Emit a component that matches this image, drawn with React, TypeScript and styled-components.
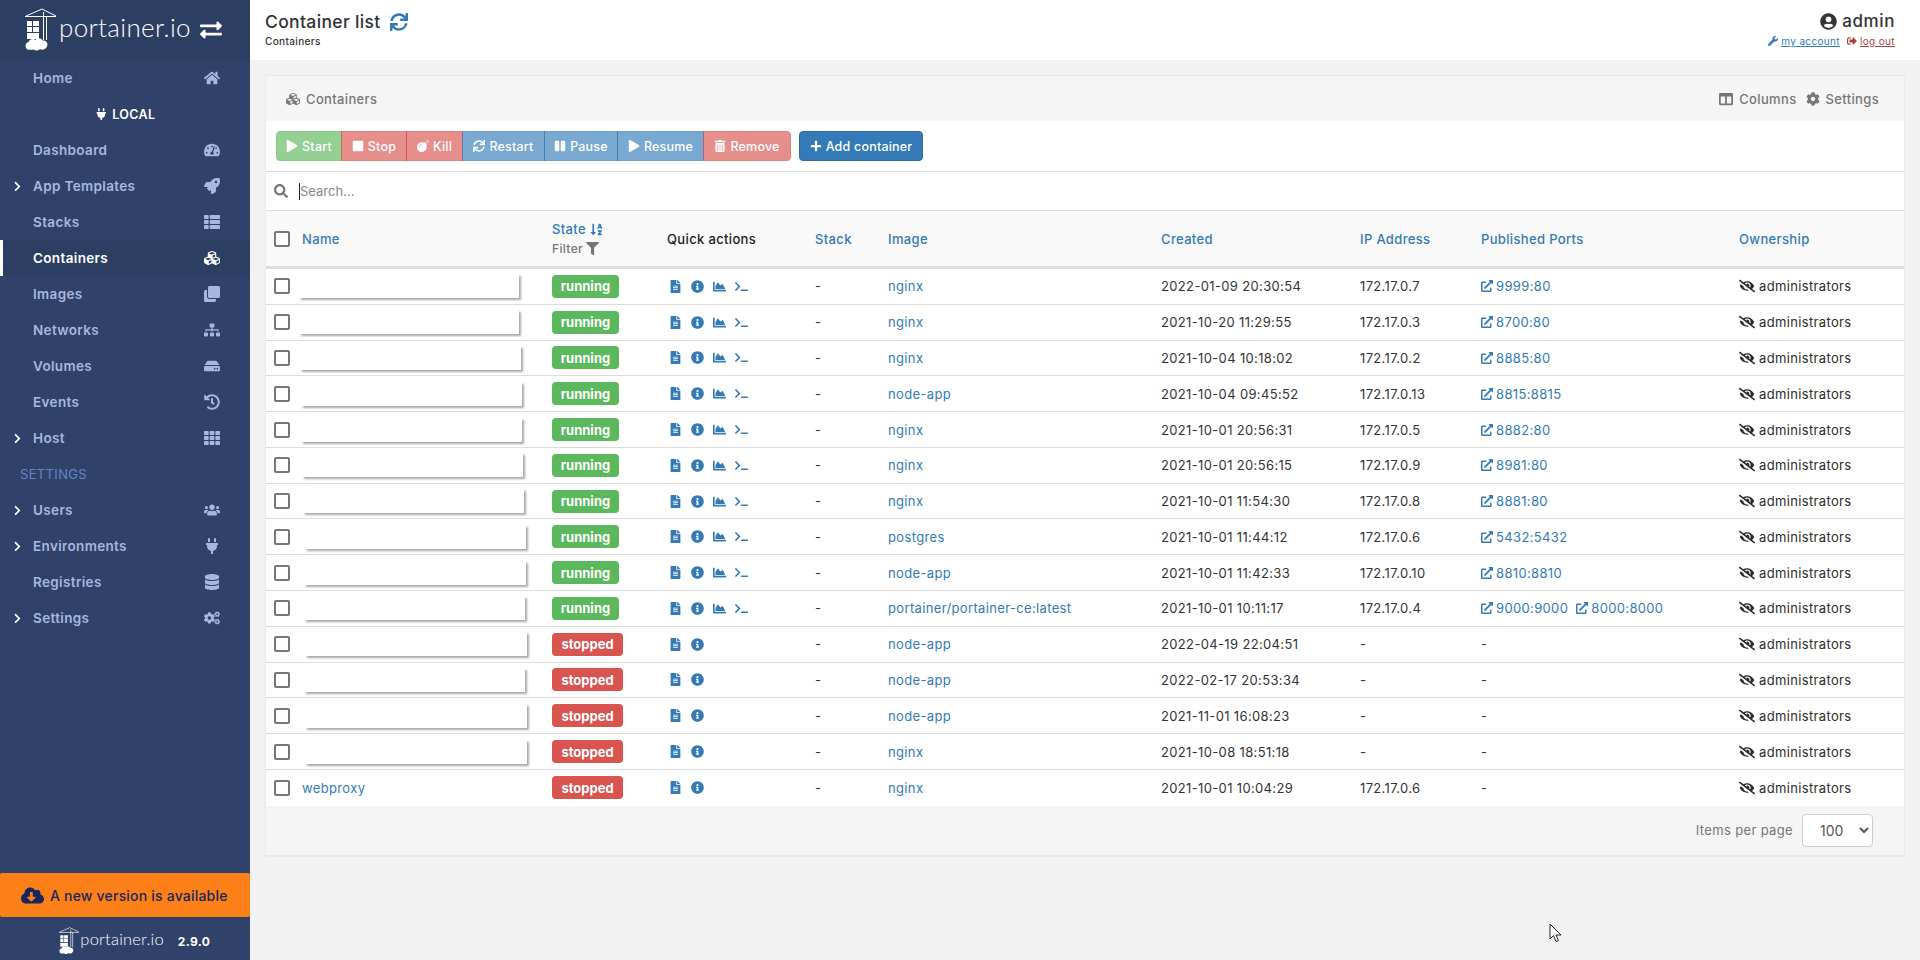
import React from 'react';
import styled, { createGlobalStyle } from 'styled-components';
import {
  FaBomb, FaChartArea, FaChevronRight, FaClone, FaCloudDownloadAlt, FaCog, FaCogs, FaColumns, FaCubes, FaDatabase,
  FaExchangeAlt, FaExternalLinkAlt, FaEyeSlash, FaFileAlt, FaFilter, FaHdd, FaHistory, FaHome, FaInfoCircle, FaPause,
  FaPlay, FaPlug, FaPlus, FaRocket, FaSearch, FaSignOutAlt, FaSitemap, FaSortAlphaDown, FaStop, FaSync, FaTachometerAlt,
  FaTerminal, FaTh, FaThList, FaTrashAlt, FaUserCircle, FaUsers, FaWrench,
} from 'react-icons/fa';

const GlobalStyle = createGlobalStyle`
  html, body { margin: 0; height: 100%; }
  body {
    background: #f2f2f2;
    color: #333;
    font-family: Inter, "Open Sans", "Liberation Sans", sans-serif;
    font-size: 13px;
    letter-spacing: 0.35px;
    overflow: hidden;
  }
  * { box-sizing: border-box; }
`;

const Page = styled.div`
  display: flex;
  width: 1920px;
  height: 960px;
  position: relative;
`;

const Sidebar = styled.aside`
  width: 250px;
  flex: none;
  display: flex;
  flex-direction: column;
  background: #30426a;
`;

const Brand = styled.div`
  height: 60px;
  flex: none;
  display: flex;
  align-items: center;
  justify-content: space-between;
  padding: 0 28px 0 25px;
  background: #2d3e63;
  color: #fff;
  font-size: 22px;
`;

const LogoWrap = styled.div<{ $small?: boolean }>`
  display: flex;
  align-items: center;
  gap: ${(p) => (p.$small ? '1px' : '2px')};
  color: #fff;
  svg { flex: none; }
`;

const LogoText = styled.span<{ $small?: boolean }>`
  font-family: Lato, sans-serif;
  font-weight: 300;
  font-size: ${(p) => (p.$small ? '16.5px' : '26px')};
  letter-spacing: ${(p) => (p.$small ? '0.2px' : '0.35px')};
  line-height: 1;
  margin-top: ${(p) => (p.$small ? '-3px' : '-6px')};
`;

const Nav = styled.nav`
  display: flex;
  flex-direction: column;
`;

const MenuRow = styled.div<{ $active?: boolean }>`
  height: 36px;
  display: flex;
  align-items: center;
  padding-right: 30px;
  font-weight: 600;
  font-size: 13.5px;
  color: ${(p) => (p.$active ? '#fff' : '#a8b7de')};
  background: ${(p) => (p.$active ? '#2d3e63' : 'transparent')};
  box-shadow: ${(p) => (p.$active ? 'inset 3px 0 0 #fff' : 'none')};
`;

const Lead = styled.span`
  width: 33px;
  flex: none;
  padding-left: 12px;
  color: #fff;
  display: flex;
  font-size: 11px;
`;

const MenuLabel = styled.span`
  flex: 1;
`;

const MenuIcon = styled.span`
  display: flex;
  font-size: 16px;
`;

const EndpointRow = styled.div`
  height: 36px;
  display: flex;
  align-items: center;
  justify-content: center;
  gap: 5px;
  color: #fff;
  font-weight: 600;
  font-size: 12.5px;
`;

const SectionLabel = styled.div`
  height: 36px;
  display: flex;
  align-items: center;
  padding-left: 20px;
  color: #6382c8;
  font-size: 13px;
`;

const SideFooter = styled.div`
  margin-top: auto;
  display: flex;
  flex-direction: column;
`;

const UpdateBanner = styled.div`
  height: 44px;
  display: flex;
  align-items: center;
  gap: 6px;
  padding-left: 21px;
  background: #fd7f17;
  border-radius: 2px;
  color: #15275c;
  font-size: 14px;
  font-weight: 500;
  letter-spacing: 0.2px;
  margin-bottom: 10px;
  svg { font-size: 23px; }
`;

const VersionRow = styled.div`
  height: 33px;
  display: flex;
  align-items: center;
  gap: 14px;
  padding: 0 0 5px 59px;
  color: #fff;
`;

const Version = styled.span`
  font-size: 12px;
  font-weight: 700;
`;

const Main = styled.main`
  flex: 1;
  display: flex;
  flex-direction: column;
  min-width: 0;
`;

const TopBar = styled.header`
  height: 60px;
  flex: none;
  display: flex;
  justify-content: space-between;
  padding: 11px 25px 0 15px;
  background: #fff;
`;

const TitleBlock = styled.div`
  display: flex;
  flex-direction: column;
`;

const TitleLine = styled.div`
  display: flex;
  align-items: center;
  gap: 9px;
  font-size: 17.5px;
  font-weight: 500;
  line-height: 21px;
  color: #333;
  svg { color: #337ab7; font-size: 18px; }
`;

const Crumb = styled.div`
  font-size: 10px;
  line-height: 12px;
  margin-top: 3px;
  font-weight: 500;
`;

const UserBlock = styled.div`
  display: flex;
  flex-direction: column;
  align-items: flex-end;
`;

const UserName = styled.div`
  display: flex;
  align-items: center;
  gap: 5px;
  font-size: 17px;
  font-weight: 500;
  line-height: 21px;
  letter-spacing: 0.6px;
  svg { font-size: 17px; }
`;

const UserLinks = styled.div`
  display: flex;
  gap: 7px;
  font-size: 10px;
  line-height: 12px;
  margin-top: 3px;
`;

const UserLink = styled.a<{ $danger?: boolean }>`
  display: flex;
  align-items: center;
  gap: 3px;
  color: ${(p) => (p.$danger ? '#a94442' : '#337ab7')};
  text-decoration: underline;
  svg { font-size: 10px; }
`;

const Content = styled.div`
  padding: 15px;
`;

const Panel = styled.section`
  height: 782px;
  display: flex;
  flex-direction: column;
  background: #f5f5f5;
  border: 1px solid #e9e9e9;
  border-bottom-width: 2px;
`;

const PanelTitle = styled.div`
  height: 45px;
  flex: none;
  display: flex;
  align-items: center;
  justify-content: space-between;
  padding: 0 25px 0 20px;
  color: #767676;
  font-weight: 500;
`;

const TitleItem = styled.span`
  display: inline-flex;
  align-items: center;
  gap: 6px;
  svg { font-size: 14px; }
`;

const TitleActions = styled.div`
  display: flex;
  gap: 9px;
`;

const Toolbar = styled.div`
  height: 51px;
  flex: none;
  display: flex;
  align-items: center;
  gap: 8px;
  padding: 0 10px;
  background: #fff;
  border-bottom: 1px solid #ddd;
`;

const ButtonGroup = styled.div`
  display: flex;
`;

const tones = {
  success: { bg: '#5cb85c', line: '#4cae4c' },
  danger: { bg: '#d9534f', line: '#d43f3a' },
  primary: { bg: '#337ab7', line: '#2e6da4' },
};

const ActionButton = styled.button<{ $tone: keyof typeof tones; $off?: boolean; $width: number }>`
  width: ${(p) => p.$width}px;
  height: 30px;
  display: inline-flex;
  align-items: center;
  justify-content: center;
  gap: 4px;
  padding: 0;
  font: inherit;
  font-size: 12.5px;
  font-weight: 500;
  letter-spacing: 0.2px;
  color: #fff;
  background: ${(p) => tones[p.$tone].bg};
  border: 1px solid ${(p) => tones[p.$tone].line};
  margin-left: ${(p) => (p.$off ? '-1px' : '0')};
  opacity: ${(p) => (p.$off ? 0.65 : 1)};
  border-radius: 0;
  &:first-child { border-radius: 4px 0 0 4px; margin-left: 0; }
  &:last-child { border-radius: 0 4px 4px 0; }
  svg { font-size: 12px; }
`;

const AddButton = styled(ActionButton)`
  border-radius: 4px;
  &:first-child, &:last-child { border-radius: 4px; }
`;

const SearchBar = styled.div`
  height: 39px;
  flex: none;
  display: flex;
  align-items: center;
  padding-left: 8px;
  background: #fff;
  border-bottom: 1px solid #ddd;
  svg { color: #767676; font-size: 14px; margin-right: 11px; }
`;

const Caret = styled.span`
  width: 1px;
  height: 17px;
  background: #222;
`;

const SearchInput = styled.input`
  flex: 1;
  border: 0;
  outline: 0;
  padding: 0;
  font: inherit;
  background: transparent;
  &::placeholder { color: #8a8a8a; }
`;

const columns = '36px 250px 115px 148px 73px 273px 199px 121px 258px 1fr';

const HeadRow = styled.div`
  height: 58px;
  flex: none;
  display: grid;
  grid-template-columns: ${columns};
  align-items: center;
  background: #f9f9f9;
  border-bottom: 3px solid #ddd;
  font-weight: 500;
`;

const HeadLink = styled.span`
  color: #337ab7;
  display: inline-flex;
  align-items: center;
  gap: 4px;
  svg { font-size: 13px; }
`;

const HeadPlain = styled.span`
  color: #222;
`;

const StateHead = styled.div`
  display: flex;
  flex-direction: column;
  gap: 4px;
`;

const FilterLabel = styled.span`
  display: inline-flex;
  align-items: center;
  gap: 3px;
  color: #767676;
  font-size: 12px;
  svg { font-size: 13px; }
`;

const Row = styled.div<{ $last?: boolean }>`
  height: 35.79px;
  flex: none;
  display: grid;
  grid-template-columns: ${columns};
  align-items: center;
  background: #fff;
  border-bottom: ${(p) => (p.$last ? '0' : '1px solid #ddd')};
`;

const CheckCell = styled.div`
  padding-left: 8px;
  display: flex;
  align-items: center;
`;

const Check = styled.input.attrs({ type: 'checkbox' })`
  appearance: none;
  width: 16px;
  height: 16px;
  margin: 0;
  background: #fff;
  border: 2px solid #767676;
  border-radius: 2px;
`;

const NameMask = styled.div<{ $left: number; $width: number }>`
  height: 24px;
  margin-left: ${(p) => p.$left}px;
  width: ${(p) => p.$width}px;
  background: #fff;
  box-shadow: 2px 2px 2px #a9a9a9;
`;

const TextLink = styled.a`
  color: #337ab7;
`;

const Badge = styled.span<{ $state: string }>`
  display: inline-flex;
  align-items: center;
  justify-content: center;
  height: 23px;
  width: ${(p) => (p.$state === 'running' ? '67px' : '71px')};
  border-radius: 4px;
  background: ${(p) => (p.$state === 'running' ? '#5cb85c' : '#d9534f')};
  color: #fff;
  font-size: 13px;
  font-weight: 700;
  letter-spacing: 0;
`;

const QuickActions = styled.div`
  display: flex;
  align-items: center;
  gap: 9px;
  padding-left: 2px;
  color: #337ab7;
  svg { font-size: 13px; }
`;

const PortList = styled.div`
  display: flex;
  gap: 8px;
`;

const PortLink = styled.a`
  display: inline-flex;
  align-items: center;
  gap: 3px;
  color: #337ab7;
  svg { font-size: 12px; }
`;

const Owner = styled.div`
  display: flex;
  align-items: center;
  gap: 4px;
  color: #2b2b2b;
  svg { font-size: 16px; }
`;

const PanelFooter = styled.div`
  flex: 1;
  display: flex;
  align-items: center;
  justify-content: flex-end;
  gap: 9px;
  padding-right: 31px;
  color: #767676;
`;

const PageSize = styled.select`
  width: 71px;
  height: 33px;
  padding-left: 13px;
  font: inherit;
  font-size: 14px;
  color: #555;
  background: #fff;
  border: 1px solid #ccc;
  border-radius: 4px;
`;

const Pointer = styled.svg`
  position: absolute;
  left: 1549px;
  top: 923px;
`;

function Logo({ small }: { small?: boolean }) {
  const h = small ? 28 : 44;
  return (
    <LogoWrap $small={small}>
      <svg width={(h * 32) / 44} height={h} viewBox="0 0 32 44" fill="#fff">
        <path d="M0 8.5h31M17 1L1 8M17 1l14 7M18.5 4v28M21.5 8v24" stroke="#fff" strokeWidth="1" fill="none" />
        <path d="M2 13h5v5H2zM8 13h6v5H8zM2 19h5v5H2zM8 19h6v5H8zM2 25h12v6H2z" />
        <path d="M1.5 40.5c-2-3-.5-6 2-6.5 1-3 5-4 7-2 2-2 6-2 7 .5 4-.5 6 3 4.500 6-1 3-5 4-7 2.500-2 2-5 2-6.500.500-2 .5-5 .5-7-.5z" />
      </svg>
      <LogoText $small={small}>portainer.io</LogoText>
    </LogoWrap>
  );
}

const menuTop = [
  { label: 'Dashboard', icon: <FaTachometerAlt /> },
  { label: 'App Templates', icon: <FaRocket />, more: true },
  { label: 'Stacks', icon: <FaThList /> },
  { label: 'Containers', icon: <FaCubes />, active: true },
  { label: 'Images', icon: <FaClone /> },
  { label: 'Networks', icon: <FaSitemap /> },
  { label: 'Volumes', icon: <FaHdd /> },
  { label: 'Events', icon: <FaHistory /> },
  { label: 'Host', icon: <FaTh />, more: true },
];

const menuSettings = [
  { label: 'Users', icon: <FaUsers />, more: true },
  { label: 'Environments', icon: <FaPlug />, more: true },
  { label: 'Registries', icon: <FaDatabase /> },
  { label: 'Settings', icon: <FaCogs />, more: true },
];

function MenuItem({ label, icon, more, active }: { label: string; icon: React.ReactNode; more?: boolean; active?: boolean }) {
  return (
    <MenuRow $active={active}>
      <Lead>{more && <FaChevronRight />}</Lead>
      <MenuLabel>{label}</MenuLabel>
      <MenuIcon>{icon}</MenuIcon>
    </MenuRow>
  );
}

const masks = [
  [-3, 220], [-3, 220], [-2, 221], [-1, 221], [-1, 221], [0, 221], [1, 221],
  [3, 221], [2, 222], [2, 221], [3, 222], [2, 221], [3, 222], [3, 222],
];

const containers = [
  { state: 'running', image: 'nginx', created: '2022-01-09 20:30:54', ip: '172.17.0.7', ports: ['9999:80'] },
  { state: 'running', image: 'nginx', created: '2021-10-20 11:29:55', ip: '172.17.0.3', ports: ['8700:80'] },
  { state: 'running', image: 'nginx', created: '2021-10-04 10:18:02', ip: '172.17.0.2', ports: ['8885:80'] },
  { state: 'running', image: 'node-app', created: '2021-10-04 09:45:52', ip: '172.17.0.13', ports: ['8815:8815'] },
  { state: 'running', image: 'nginx', created: '2021-10-01 20:56:31', ip: '172.17.0.5', ports: ['8882:80'] },
  { state: 'running', image: 'nginx', created: '2021-10-01 20:56:15', ip: '172.17.0.9', ports: ['8981:80'] },
  { state: 'running', image: 'nginx', created: '2021-10-01 11:54:30', ip: '172.17.0.8', ports: ['8881:80'] },
  { state: 'running', image: 'postgres', created: '2021-10-01 11:44:12', ip: '172.17.0.6', ports: ['5432:5432'] },
  { state: 'running', image: 'node-app', created: '2021-10-01 11:42:33', ip: '172.17.0.10', ports: ['8810:8810'] },
  { state: 'running', image: 'portainer/portainer-ce:latest', created: '2021-10-01 10:11:17', ip: '172.17.0.4', ports: ['9000:9000', '8000:8000'] },
  { state: 'stopped', image: 'node-app', created: '2022-04-19 22:04:51', ip: '-', ports: [] },
  { state: 'stopped', image: 'node-app', created: '2022-02-17 20:53:34', ip: '-', ports: [] },
  { state: 'stopped', image: 'node-app', created: '2021-11-01 16:08:23', ip: '-', ports: [] },
  { state: 'stopped', image: 'nginx', created: '2021-10-08 18:51:18', ip: '-', ports: [] },
  { state: 'stopped', image: 'nginx', created: '2021-10-01 10:04:29', ip: '172.17.0.6', ports: [], name: 'webproxy' },
];

export default function App() {
  return (
    <Page>
      <GlobalStyle />
      <Sidebar>
        <Brand>
          <Logo />
          <FaExchangeAlt />
        </Brand>
        <Nav>
          <MenuItem label="Home" icon={<FaHome />} />
          <EndpointRow>
            <FaPlug />
            LOCAL
          </EndpointRow>
          {menuTop.map((m) => (
            <MenuItem key={m.label} {...m} />
          ))}
          <SectionLabel>SETTINGS</SectionLabel>
          {menuSettings.map((m) => (
            <MenuItem key={m.label} {...m} />
          ))}
        </Nav>
        <SideFooter>
          <UpdateBanner>
            <FaCloudDownloadAlt />
            A new version is available
          </UpdateBanner>
          <VersionRow>
            <Logo small />
            <Version>2.9.0</Version>
          </VersionRow>
        </SideFooter>
      </Sidebar>
      <Main>
        <TopBar>
          <TitleBlock>
            <TitleLine>
              Container list
              <FaSync />
            </TitleLine>
            <Crumb>Containers</Crumb>
          </TitleBlock>
          <UserBlock>
            <UserName>
              <FaUserCircle />
              admin
            </UserName>
            <UserLinks>
              <UserLink>
                <FaWrench />
                my account
              </UserLink>
              <UserLink $danger>
                <FaSignOutAlt />
                log out
              </UserLink>
            </UserLinks>
          </UserBlock>
        </TopBar>
        <Content>
          <Panel>
            <PanelTitle>
              <TitleItem>
                <FaCubes />
                Containers
              </TitleItem>
              <TitleActions>
                <TitleItem>
                  <FaColumns />
                  Columns
                </TitleItem>
                <TitleItem>
                  <FaCog />
                  Settings
                </TitleItem>
              </TitleActions>
            </PanelTitle>
            <Toolbar>
              <ButtonGroup>
                <ActionButton $tone="success" $off $width={66}><FaPlay />Start</ActionButton>
                <ActionButton $tone="danger" $off $width={66}><FaStop />Stop</ActionButton>
                <ActionButton $tone="danger" $off $width={57}><FaBomb />Kill</ActionButton>
                <ActionButton $tone="primary" $off $width={83}><FaSync />Restart</ActionButton>
                <ActionButton $tone="primary" $off $width={74}><FaPause />Pause</ActionButton>
                <ActionButton $tone="primary" $off $width={87}><FaPlay />Resume</ActionButton>
                <ActionButton $tone="danger" $off $width={88}><FaTrashAlt />Remove</ActionButton>
              </ButtonGroup>
              <AddButton $tone="primary" $width={124}><FaPlus />Add container</AddButton>
            </Toolbar>
            <SearchBar>
              <FaSearch />
              <Caret />
              <SearchInput placeholder="Search..." />
            </SearchBar>
            <HeadRow>
              <CheckCell><Check /></CheckCell>
              <HeadLink>Name</HeadLink>
              <StateHead>
                <HeadLink>State <FaSortAlphaDown /></HeadLink>
                <FilterLabel>Filter <FaFilter /></FilterLabel>
              </StateHead>
              <HeadPlain>Quick actions</HeadPlain>
              <HeadLink>Stack</HeadLink>
              <HeadLink>Image</HeadLink>
              <HeadLink>Created</HeadLink>
              <HeadLink>IP Address</HeadLink>
              <HeadLink>Published Ports</HeadLink>
              <HeadLink>Ownership</HeadLink>
            </HeadRow>
            {containers.map((c, i) => (
              <Row key={c.created} $last={i === containers.length - 1}>
                <CheckCell><Check /></CheckCell>
                {c.name ? (
                  <TextLink>{c.name}</TextLink>
                ) : (
                  <NameMask $left={masks[i][0]} $width={masks[i][1]} />
                )}
                <div><Badge $state={c.state}>{c.state}</Badge></div>
                <QuickActions>
                  <FaFileAlt />
                  <FaInfoCircle />
                  {c.state === 'running' && <FaChartArea />}
                  {c.state === 'running' && <FaTerminal />}
                </QuickActions>
                <span>-</span>
                <TextLink>{c.image}</TextLink>
                <span>{c.created}</span>
                <span>{c.ip}</span>
                {c.ports.length > 0 ? (
                  <PortList>
                    {c.ports.map((p) => (
                      <PortLink key={p}><FaExternalLinkAlt />{p}</PortLink>
                    ))}
                  </PortList>
                ) : (
                  <span>-</span>
                )}
                <Owner><FaEyeSlash />administrators</Owner>
              </Row>
            ))}
            <PanelFooter>
              Items per page
              <PageSize defaultValue="100">
                <option value="10">10</option>
                <option value="25">25</option>
                <option value="50">50</option>
                <option value="100">100</option>
              </PageSize>
            </PanelFooter>
          </Panel>
        </Content>
      </Main>
      <Pointer width="14" height="20" viewBox="0 0 14 20">
        <path d="M1 1v15l3.500-3.500 2.500 6 2.500-1-2.500-5.500h5z" fill="#fff" stroke="#222" strokeWidth="1" />
      </Pointer>
    </Page>
  );
}
